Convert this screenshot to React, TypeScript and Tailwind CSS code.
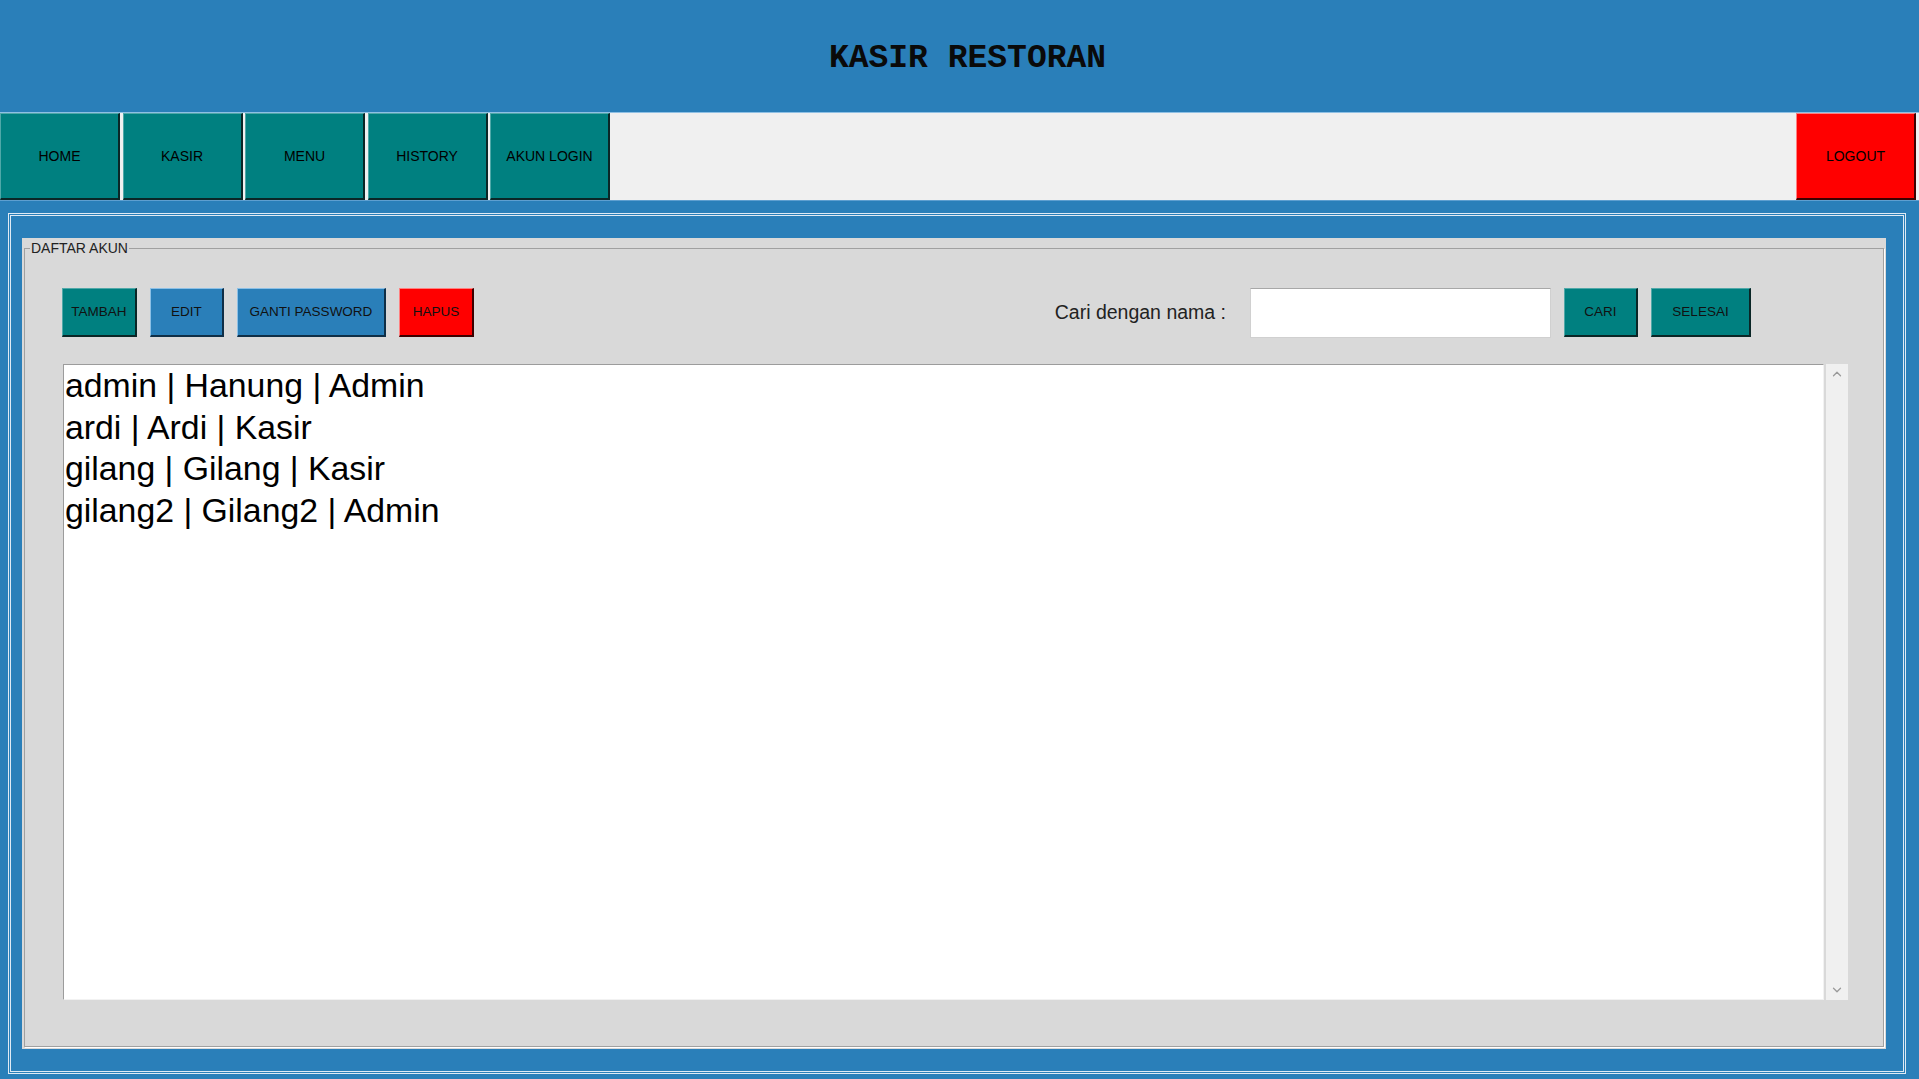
import { ChevronDown, ChevronUp } from "lucide-react";

const navItems = ["HOME", "KASIR", "MENU", "HISTORY", "AKUN LOGIN"];

const akunList = [
  "admin | Hanung | Admin",
  "ardi | Ardi | Kasir",
  "gilang | Gilang | Kasir",
  "gilang2 | Gilang2 | Admin",
];

const tones = {
  teal: "bg-[#008080] border-t-[#4fa8a8] border-l-[#4fa8a8] border-b-[#0a2626] border-r-[#0a2626]",
  blue: "bg-[#2a7fb9] border-t-[#8cc0e6] border-l-[#8cc0e6] border-b-[#0f2f47] border-r-[#0f2f47]",
  red: "bg-[#ff0000] border-t-[#ff8080] border-l-[#ff8080] border-b-[#3d0000] border-r-[#3d0000]",
};

type Tone = keyof typeof tones;

const ActionButton = ({ label, tone, className }: { label: string; tone: Tone; className: string }) => {
  return (
    <button
      type="button"
      className={`h-[49px] border-t border-l border-b-2 border-r-2 text-[13.5px] text-[#111] ${tones[tone]} ${className}`}
    >
      {label}
    </button>
  );
};

const App = () => {
  return (
    <div className="h-screen w-full flex flex-col overflow-hidden bg-[#2a7fb9] font-['Liberation_Sans',Arial,sans-serif]">
      {/* judul */}
      <div className="h-[112px] shrink-0 flex items-center justify-center pl-[16px] pt-[5px]">
        <h1 className="font-['Liberation_Mono','Courier_New',monospace] font-bold text-[33px] text-[#0a0a0a]">
          KASIR RESTORAN
        </h1>
      </div>

      {/* navigasi */}
      <div className="h-[88px] shrink-0 flex bg-[#f0f0f0] border-t border-[#8fc0e4]">
        <div className="flex gap-[2.5px]">
          {navItems.map((item) => (
            <button
              key={item}
              type="button"
              className="w-[120px] h-full bg-[#008080] border-t border-l border-b-2 border-r-2 border-t-[#4fa8a8] border-l-[#4fa8a8] border-b-[#0a2626] border-r-[#0a2626] text-[14px] text-black"
            >
              {item}
            </button>
          ))}
        </div>
        <button
          type="button"
          className="ml-auto mr-[3px] w-[120px] h-full bg-[#ff0000] border-t border-l border-b-2 border-r-2 border-t-[#ff8080] border-l-[#ff8080] border-b-[#3d0000] border-r-[#3d0000] text-[14px] text-black"
        >
          LOGOUT
        </button>
      </div>

      {/* isi */}
      <div className="flex-1 min-h-0 flex border-t border-[#5e9fd0] pt-[12px] pl-[8px] pr-[13px] pb-[5px]">
        <div className="flex-1 flex border-[3px] border-double border-[#dfeaf4] pt-[22px] pl-[11px] pr-[17px] pb-[22px]">
          <div className="flex-1 flex flex-col bg-[#d9d9d9] p-[2px]">
            <fieldset className="flex-1 min-h-0 flex flex-col border border-[#a0a0a0] shadow-[1px_1px_0_#ffffff]">
              <legend className="ml-[5px] px-[1px] text-[14px] leading-[16px] text-[#222]">DAFTAR AKUN</legend>
              <div className="flex-1 min-h-0 flex flex-col pl-[37px] pr-[35px] pt-[32px] pb-[46px]">
                <div className="flex items-center h-[49px]">
                  <div className="flex gap-[13px]">
                    <ActionButton label="TAMBAH" tone="teal" className="w-[75px]" />
                    <ActionButton label="EDIT" tone="blue" className="w-[74px]" />
                    <ActionButton label="GANTI PASSWORD" tone="blue" className="w-[149px]" />
                    <ActionButton label="HAPUS" tone="red" className="w-[75px]" />
                  </div>
                  <div className="ml-auto mr-[97px] flex items-center">
                    <span className="text-[19.5px] text-[#222] mr-[24px]">Cari dengan nama :</span>
                    <input
                      type="text"
                      className="w-[301px] h-[50px] bg-white border border-[#d0d0d0] border-t-[#a8a8a8] outline-none px-2 text-[18px]"
                    />
                    <ActionButton label="CARI" tone="teal" className="w-[74px] ml-[13px]" />
                    <ActionButton label="SELESAI" tone="teal" className="w-[100px] ml-[13px]" />
                  </div>
                </div>

                <div className="mt-[27px] flex-1 min-h-0 flex gap-[2px] pl-[1px]">
                  <div className="flex-1 bg-white border border-[#9c9c9c] border-b-[#f2f2f2] border-r-[#f2f2f2] pl-[1px]">
                    {akunList.map((row) => (
                      <div key={row} className="text-[33.8px] leading-[41.5px] text-black">
                        {row}
                      </div>
                    ))}
                  </div>
                  <div className="w-[22px] bg-[#f0f0f0] flex flex-col justify-between items-center py-[3px]">
                    <ChevronUp size={14} strokeWidth={2.2} className="text-[#9a9a9a]" />
                    <ChevronDown size={14} strokeWidth={2.2} className="text-[#9a9a9a]" />
                  </div>
                </div>
              </div>
            </fieldset>
          </div>
        </div>
      </div>
    </div>
  );
};

export default App;
